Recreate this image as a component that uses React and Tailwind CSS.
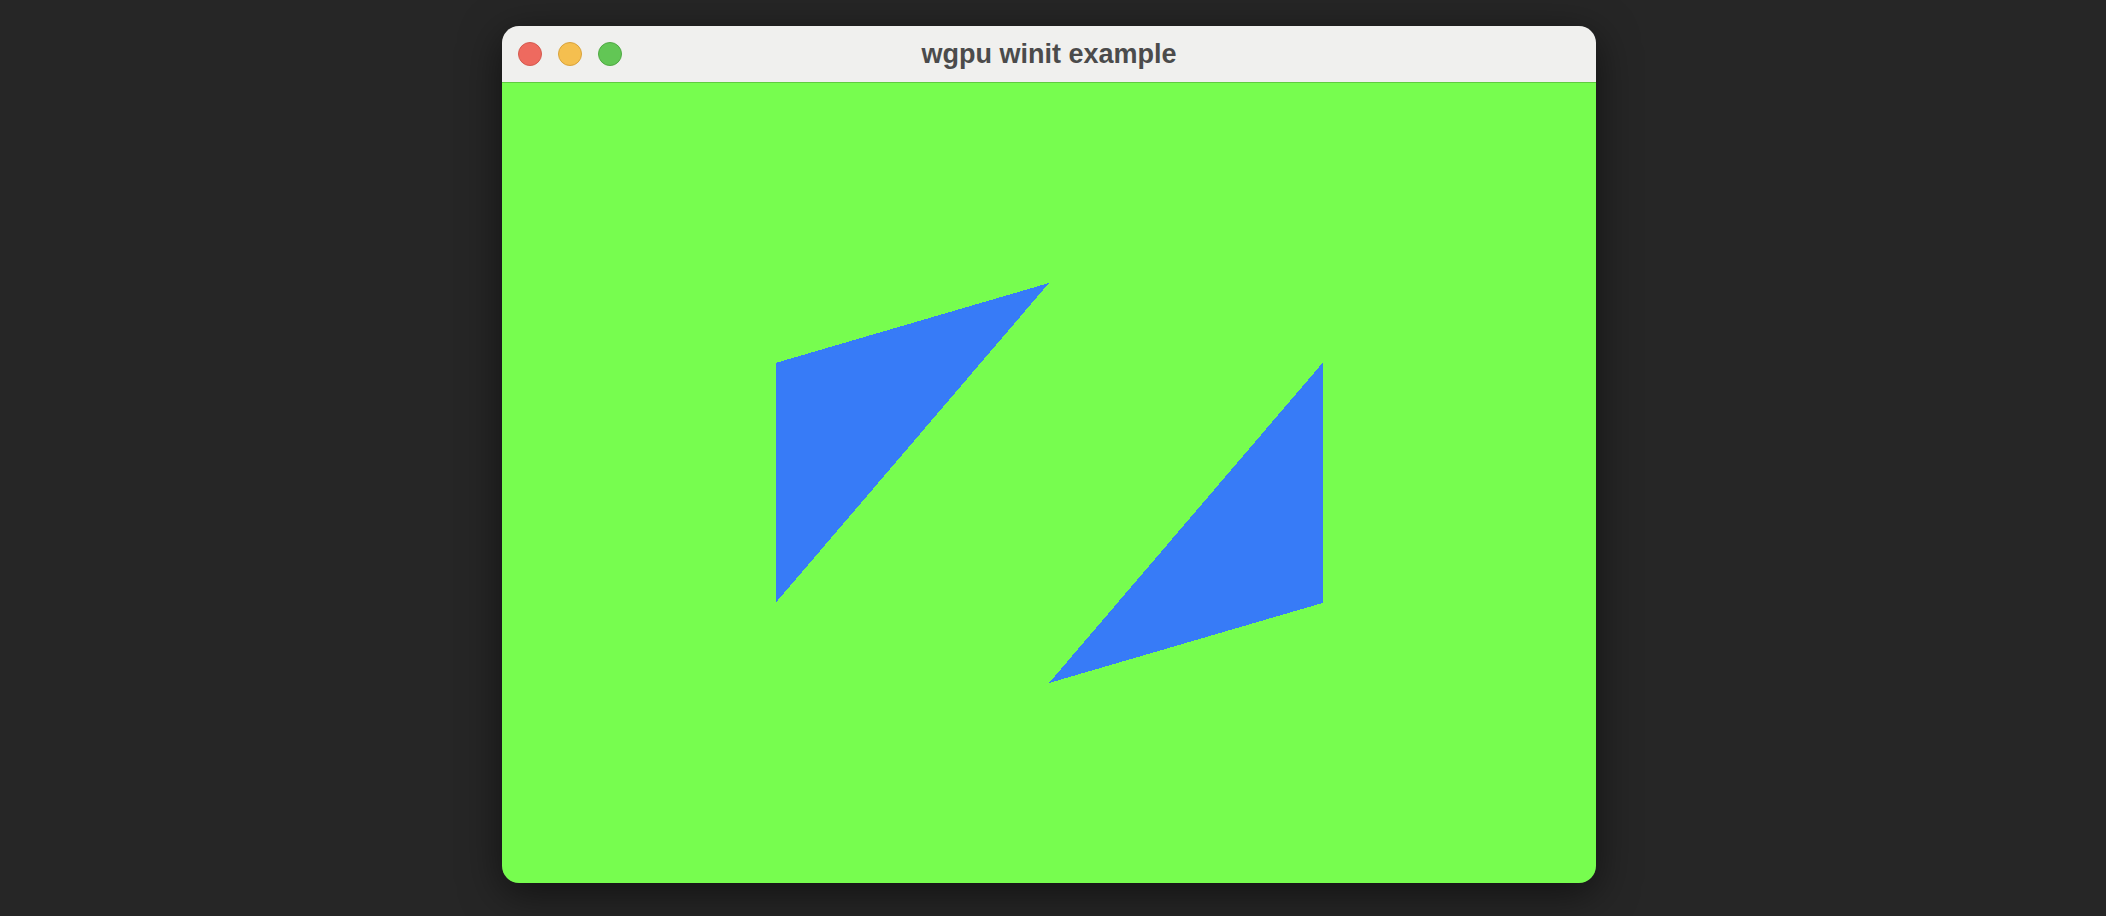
export default function App() {
  return (
    <div className="min-h-[916px] w-full bg-[#262626] flex justify-center pt-[26px]">
      <div className="mr-[8px] w-[1094px] h-[857px] rounded-[17px] overflow-hidden flex flex-col shadow-[0_10px_40px_rgba(0,0,0,0.55)]">
        {/* title bar */}
        <div className="relative h-[56px] shrink-0 bg-[#f0f0ee] flex items-center justify-center">
          <div className="absolute left-[16px] top-[16px] flex gap-[16px]">
            <span className="w-[24px] h-[24px] rounded-full bg-[#ee6a5f] border border-[#d55a4f]" />
            <span className="w-[24px] h-[24px] rounded-full bg-[#f5bf4f] border border-[#d9a33c]" />
            <span className="w-[24px] h-[24px] rounded-full bg-[#62c655] border border-[#50a944]" />
          </div>
          <span className="font-['Liberation_Sans',Arial,sans-serif] font-bold text-[27px] text-[#4b4b4b] leading-none">
            wgpu winit example
          </span>
        </div>
        <div className="h-px shrink-0 bg-[#5fcc3f]" />
        {/* surface */}
        <div className="h-[800px] bg-[#77fd4f]">
          <svg
            className="block w-[1094px] h-[800px]"
            width="1094"
            height="800"
            viewBox="-1 -1 2 2"
            preserveAspectRatio="none"
            shapeRendering="crispEdges"
          >
            <polygon points="-0.5,-0.3 0,-0.5 -0.5,0.3" fill="#377bf7" />
            <polygon points="0.5,-0.3 0.5,0.3 0,0.5" fill="#377bf7" />
          </svg>
        </div>
      </div>
    </div>
  );
}
